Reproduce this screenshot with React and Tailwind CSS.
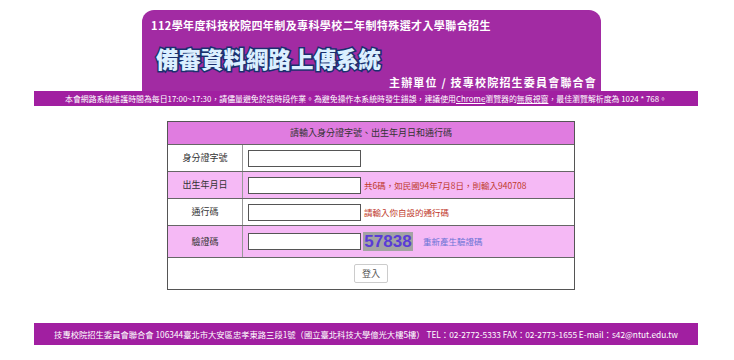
export default function App() {
  const font = { fontFamily: '"Noto Sans CJK TC", "Liberation Sans", sans-serif' };
  return (
    <div className="w-[734px] h-[360px] bg-white overflow-hidden" style={font}>
      <div className="pt-[10px]">
        {/* banner */}
        <div className="ml-[142px] w-[459px] h-[81px] bg-[#a22ba3] rounded-t-[12px] flex flex-col pl-[9px] pr-[4px] pt-[8px]">
          <div className="text-white font-bold text-[11px] leading-[14px] tracking-[0.4px]">
            112學年度科技校院四年制及專科學校二年制特殊選才入學聯合招生
          </div>
          <div className="mt-[14px] ml-[5px] text-[22.5px] leading-[24px] font-black text-[#dcefff] [-webkit-text-stroke:3px_#1b2f6e] [paint-order:stroke_fill]">
            備審資料網路上傳系統
          </div>
          <div className="mt-[6px] self-end text-white font-bold text-[11px] leading-[13px] tracking-[1.2px]">
            主辦單位 / 技專校院招生委員會聯合會
          </div>
        </div>
        {/* notice strip */}
        <div className="mx-[34px] w-[664px] h-[15px] bg-[#a11fa1] flex items-center justify-center text-white text-[7.9px] leading-none">
          本會網路系統維護時間為每日17:00~17:30，請儘量避免於該時段作業。為避免操作本系統時發生錯誤，建議使用<span className="underline">Chrome</span>瀏覽器的<span className="underline">無痕視窗</span>，最佳瀏覽解析度為 1024 * 768。
        </div>

        {/* login table */}
        <div className="mt-[15px] ml-[167px] w-[408px] border border-[#555] text-[9px] text-[#333]">
          <div className="h-[23px] bg-[#e07ce0] flex items-center justify-center border-b border-[#666]">
            請輸入身分證字號、出生年月日和通行碼
          </div>
          <div className="h-[27px] flex bg-white border-b border-[#666]">
            <div className="w-[75px] flex items-center justify-center border-r border-[#999]">身分證字號</div>
            <div className="flex items-center pl-[5px]">
              <div className="w-[113px] h-[17px] border border-[#555] bg-white" />
            </div>
          </div>
          <div className="h-[27px] flex bg-[#f5b9f5] border-b border-[#666]">
            <div className="w-[75px] flex items-center justify-center border-r border-[#999]">出生年月日</div>
            <div className="flex items-center pl-[5px] gap-[3px]">
              <div className="w-[113px] h-[17px] border border-[#555] bg-white" />
              <span className="text-[#c0392b] text-[8.5px]">共6碼，如民國94年7月8日，則輸入940708</span>
            </div>
          </div>
          <div className="h-[27px] flex bg-white border-b border-[#666]">
            <div className="w-[75px] flex items-center justify-center border-r border-[#999]">通行碼</div>
            <div className="flex items-center pl-[5px] gap-[3px]">
              <div className="w-[113px] h-[17px] border border-[#555] bg-white" />
              <span className="text-[#c0392b] text-[8.5px]">請輸入你自設的通行碼</span>
            </div>
          </div>
          <div className="h-[32px] flex bg-[#f5b9f5] border-b border-[#666]">
            <div className="w-[75px] flex items-center justify-center border-r border-[#999]">驗證碼</div>
            <div className="flex items-center pl-[5px]">
              <div className="w-[113px] h-[17px] border border-[#555] bg-white" />
              <div className="ml-[2px] w-[50px] h-[19px] bg-[#a3a3a3] flex items-center justify-center text-[#5a3cd6] font-bold text-[17px] leading-none" style={{ fontFamily: '"Liberation Sans", sans-serif' }}>
                57838
              </div>
              <span className="ml-[10px] text-[#6b73d6] text-[8.5px]">重新產生驗證碼</span>
            </div>
          </div>
          <div className="h-[31px] flex items-center justify-center bg-white">
            <div className="w-[34px] h-[19px] border border-[#ccc] rounded-[2px] flex items-center justify-center text-[9px] text-[#555] bg-white">
              登入
            </div>
          </div>
        </div>

        {/* footer */}
        <div className="mt-[33px] mx-[34px] w-[664px] h-[22px] bg-[#a11fa1] flex items-center justify-center text-white text-[8.3px] leading-none">
          技專校院招生委員會聯合會 106344臺北市大安區忠孝東路三段1號（國立臺北科技大學億光大樓5樓） TEL：02-2772-5333 FAX：02-2773-1655 E-mail：s42@ntut.edu.tw
        </div>
      </div>
    </div>
  );
}
